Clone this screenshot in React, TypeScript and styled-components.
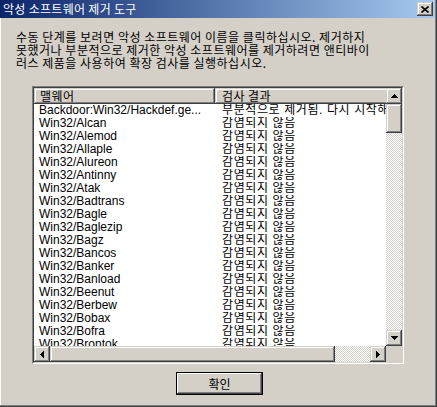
import React from "react";
import styled, { createGlobalStyle } from "styled-components";

const GlobalStyle = createGlobalStyle`
  html, body {
    margin: 0;
    padding: 0;
    background: #d4d0c8;
  }
  body {
    font-family: "Liberation Sans", "Noto Sans CJK KR", sans-serif;
    font-size: 12px;
    color: #000;
  }
`;

interface ResultRow {
  name: string;
  result: string;
}

const rows: ResultRow[] = [
  { name: "Backdoor:Win32/Hackdef.ge...", result: "부분적으로 제거됨. 다시 시작해야 합니다." },
  ...[
    "Alcan",
    "Alemod",
    "Allaple",
    "Alureon",
    "Antinny",
    "Atak",
    "Badtrans",
    "Bagle",
    "Baglezip",
    "Bagz",
    "Bancos",
    "Banker",
    "Banload",
    "Beenut",
    "Berbew",
    "Bobax",
    "Bofra",
    "Brontok",
    "Buchon",
  ].map((n) => ({ name: `Win32/${n}`, result: "감염되지 않음" })),
];

const COL1 = 181;
const COL2 = 214;

const Arrow: React.FC<{ dir: "up" | "down" | "left" | "right" }> = ({ dir }) => {
  const pts = {
    up: "3.5,0 7,4 0,4",
    down: "0,0 7,0 3.5,4",
    left: "4,0 4,7 0,3.5",
    right: "0,0 4,3.5 0,7",
  }[dir];
  const vertical = dir === "up" || dir === "down";
  return (
    <svg width={vertical ? 7 : 4} height={vertical ? 4 : 7} viewBox={vertical ? "0 0 7 4" : "0 0 4 7"}>
      <polygon points={pts} fill="#000" shapeRendering="crispEdges" />
    </svg>
  );
};

const App: React.FC = () => {
  return (
    <>
      <GlobalStyle />
      <Window>
        <Frame>
          <TitleBar>
            <Title>악성 소프트웨어 제거 도구</Title>
            <CloseButton>
              <svg width="8" height="7" viewBox="0 0 8 7">
                <path d="M0.5 0.5 L7.5 6.5 M7.5 0.5 L0.5 6.5" stroke="#000" strokeWidth="1.6" />
              </svg>
            </CloseButton>
          </TitleBar>
          <Body>
            <Description>
              <Line>수동 단계를 보려면 악성 소프트웨어 이름을 클릭하십시오. 제거하지</Line>
              <Line>못했거나 부분적으로 제거한 악성 소프트웨어를 제거하려면 앤티바이</Line>
              <Line>러스 제품을 사용하여 확장 검사를 실행하십시오.</Line>
            </Description>
            <ListBox>
              <Well>
                <Viewport>
                  <HeaderRow>
                    <HeaderCell $width={COL1}>맬웨어</HeaderCell>
                    <HeaderCell $width={COL2} $pad={7}>검사 결과</HeaderCell>
                  </HeaderRow>
                  {rows.map((r, i) => (
                    <Row key={i}>
                      <Cell $width={COL1} $pad={5}>{r.name}</Cell>
                      <Cell $width={COL2} $pad={7} $spacing={0.6}>{r.result}</Cell>
                    </Row>
                  ))}
                </Viewport>
                <VScroll>
                  <ScrollButton><Arrow dir="up" /></ScrollButton>
                  <Thumb style={{ height: 29 }} />
                  <Track />
                  <ScrollButton><Arrow dir="down" /></ScrollButton>
                </VScroll>
                <HScroll>
                  <ScrollButton><Arrow dir="left" /></ScrollButton>
                  <Thumb style={{ width: 285 }} />
                  <Track />
                  <ScrollButton><Arrow dir="right" /></ScrollButton>
                </HScroll>
                <Corner />
              </Well>
            </ListBox>
            <ButtonRow>
              <OkButton>확인</OkButton>
            </ButtonRow>
          </Body>
        </Frame>
      </Window>
    </>
  );
};

const Window = styled.div`
  width: 437px;
  height: 407px;
  box-sizing: border-box;
  background: #d4d0c8;
  border-right: 1px solid #404040;
  border-bottom: 1px solid #404040;
  display: flex;
  flex-direction: column;
  overflow: hidden;
`;

const Frame = styled.div`
  flex: 1;
  min-height: 0;
  border-right: 1px solid #808080;
  border-bottom: 1px solid #808080;
  display: flex;
  flex-direction: column;
`;

const TitleBar = styled.div`
  height: 18px;
  flex-shrink: 0;
  display: flex;
  align-items: center;
  justify-content: space-between;
  padding: 0 2px 0 3px;
  background: linear-gradient(to right, #0a246a, #a6caf0);
`;

const Title = styled.div`
  color: #fff;
  font-family: "Noto Sans CJK KR", sans-serif;
  font-size: 12px;
  line-height: 18px;
  letter-spacing: 0.3px;
  white-space: nowrap;
`;

const raised = `
  background: #d4d0c8;
  box-shadow: inset -1px -1px #404040, inset 1px 1px #d4d0c8,
    inset -2px -2px #808080, inset 2px 2px #fff;
`;

const CloseButton = styled.div`
  width: 16px;
  height: 14px;
  box-sizing: border-box;
  display: flex;
  align-items: center;
  justify-content: center;
  ${raised}
`;

const Body = styled.div`
  flex: 1;
  display: flex;
  flex-direction: column;
  border-left: 1px solid #fff;
  padding: 12px 0 0 15px;
`;

const Description = styled.div`
  font-family: "Noto Sans CJK KR", sans-serif;
  font-size: 12px;
  line-height: 13px;
  letter-spacing: 0.5px;
`;

const Line = styled.div`
  white-space: nowrap;
`;

const ListBox = styled.div`
  margin: 17px 0 0 16px;
  width: 372px;
  height: 278px;
  box-sizing: border-box;
  border: 1px solid;
  border-color: #808080 #fff #fff #808080;
`;

const Well = styled.div`
  height: 100%;
  box-sizing: border-box;
  border: 1px solid;
  border-color: #404040 #d4d0c8 #d4d0c8 #404040;
  display: grid;
  grid-template-columns: 352px 16px;
  grid-template-rows: 258px 16px;
`;

const Viewport = styled.div`
  background: #fff;
  overflow: hidden;
`;

const HeaderRow = styled.div`
  display: flex;
  height: 16px;
`;

const HeaderCell = styled.div<{ $width: number; $pad?: number }>`
  flex: 0 0 ${({ $width }) => $width}px;
  box-sizing: border-box;
  padding-left: ${({ $pad }) => $pad ?? 6}px;
  font-family: "Noto Sans CJK KR", sans-serif;
  font-size: 12px;
  line-height: 15px;
  letter-spacing: 0.4px;
  white-space: nowrap;
  overflow: hidden;
  ${raised}
`;

const Row = styled.div`
  display: flex;
  height: 13px;
  line-height: 13px;
`;

const Cell = styled.div<{ $width: number; $pad: number; $spacing?: number }>`
  flex: 0 0 ${({ $width }) => $width}px;
  box-sizing: border-box;
  padding-left: ${({ $pad }) => $pad}px;
  letter-spacing: ${({ $spacing }) => $spacing ?? 0}px;
  white-space: nowrap;
  overflow: hidden;
  font-family: "Liberation Sans", "Noto Sans CJK KR", sans-serif;
  font-size: 12px;
`;

const VScroll = styled.div`
  display: flex;
  flex-direction: column;
`;

const HScroll = styled.div`
  display: flex;
`;

const ScrollButton = styled.div`
  width: 16px;
  height: 16px;
  flex-shrink: 0;
  box-sizing: border-box;
  display: flex;
  align-items: center;
  justify-content: center;
  ${raised}
`;

const Thumb = styled.div`
  flex-shrink: 0;
  min-width: 16px;
  min-height: 16px;
  box-sizing: border-box;
  ${raised}
`;

const Track = styled.div`
  flex: 1;
  background: repeating-conic-gradient(#d4d0c8 0 25%, #fff 0 50%) 0 0 / 2px 2px;
`;

const Corner = styled.div`
  background: #d4d0c8;
`;

const ButtonRow = styled.div`
  margin: 8px 0 0 16px;
  width: 372px;
  padding-left: 3px;
  box-sizing: border-box;
  display: flex;
  justify-content: center;
`;

const OkButton = styled.div`
  width: 87px;
  height: 23px;
  box-sizing: border-box;
  border: 1px solid #000;
  display: flex;
  align-items: center;
  justify-content: center;
  font-family: "Noto Sans CJK KR", sans-serif;
  font-size: 12px;
  background: #d4d0c8;
  box-shadow: inset -1px -1px #404040, inset 1px 1px #fff, inset -2px -2px #808080;
`;

export default App;
